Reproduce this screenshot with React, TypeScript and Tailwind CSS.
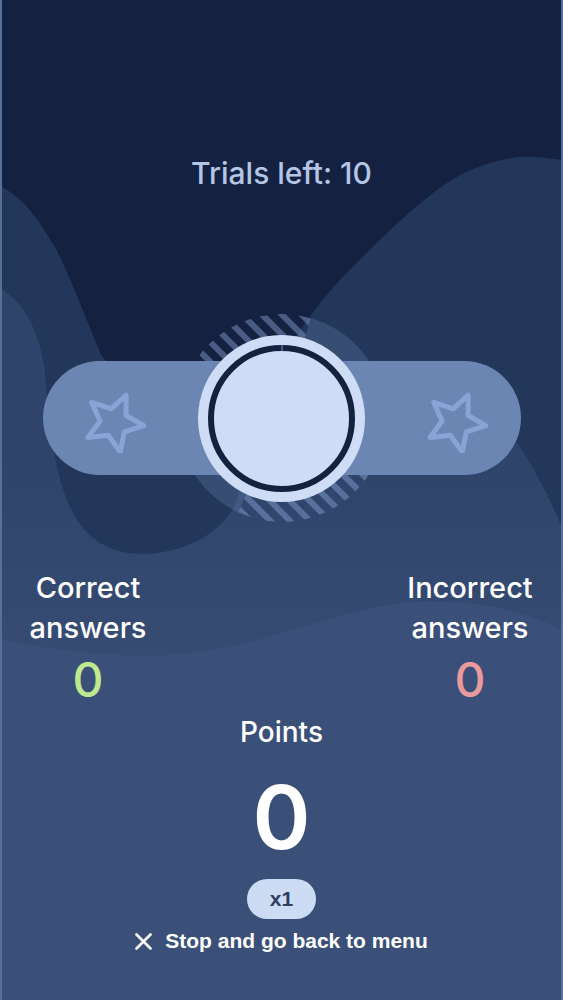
import React from "react";

const starPoints =
  "12.2,-27.4 12.12,-7 29.84,3.14 10.4,9.37 6.24,29.34 -5.69,12.79 -25.98,15 -13.92,-1.46 -22.29,-20.07 -2.91,-13.69";

function Star() {
  return (
    <svg width="70" height="70" viewBox="-35 -39.5 70 70">
      <polygon
        points={starPoints}
        fill="none"
        stroke="#8aa3d6"
        strokeWidth="5"
        strokeLinejoin="round"
      />
    </svg>
  );
}

function Halo() {
  return (
    <svg
      className="col-start-1 row-start-1"
      width="208"
      height="208"
      viewBox="0 0 208 208"
    >
      <defs>
        <pattern
          id="stripes"
          width="14"
          height="14"
          patternUnits="userSpaceOnUse"
          patternTransform="rotate(-45)"
        >
          <rect width="6" height="14" fill="rgba(140,165,215,0.45)" />
        </pattern>
        <clipPath id="stripeClip">
          <path d="M104,104 L207.6,94.9 A104,104 0 0 1 60,198.3 Z" />
          <path d="M104,104 L0,104 A104,104 0 0 1 132.7,4 Z" />
        </clipPath>
      </defs>
      <circle cx="104" cy="104" r="104" fill="url(#stripes)" clipPath="url(#stripeClip)" />
      <path
        d="M104,104 L132.7,4 A104,104 0 0 1 207.6,94.9 Z"
        fill="rgba(140,165,215,0.2)"
      />
      <path
        d="M104,104 L60,198.3 A104,104 0 0 1 0,104 Z"
        fill="rgba(140,165,215,0.2)"
      />
    </svg>
  );
}

function Background() {
  return (
    <svg
      className="absolute inset-0 h-full w-full"
      viewBox="0 0 563 1000"
      preserveAspectRatio="none"
    >
      <defs>
        <linearGradient id="lighter" x1="0" y1="460" x2="0" y2="660" gradientUnits="userSpaceOnUse">
          <stop offset="0" stopColor="#2e446b" />
          <stop offset="1" stopColor="#364c73" />
        </linearGradient>
      </defs>
      <rect width="563" height="1000" fill="#3a5078" />
      <path
        d="M0,0 H563 V630 C530,612 480,600 420,602 C340,606 260,650 170,655 C100,658 40,648 0,640 Z"
        fill="url(#lighter)"
      />
      <path
        d="M0,0 H563 V525 C548,490 530,458 517,440 L248,440 C245,470 240,495 232,510 C215,535 185,552 145,554 C110,555 85,540 70,510 C50,470 47,410 43,370 C38,330 20,300 0,290 Z"
        fill="#22375a"
      />
      <path
        d="M0,0 H563 V160 C548,158 535,156 521,157 C495,160 470,168 445,185 C410,210 380,240 350,270 C320,300 300,330 280,360 L260,440 L170,440 C150,400 120,380 100,355 C85,320 70,280 55,250 C40,225 25,200 0,187 Z"
        fill="#142140"
      />
    </svg>
  );
}

export default function App() {
  return (
    <div className="relative h-[1000px] w-full overflow-hidden border-x-2 border-[rgba(150,170,205,0.35)] bg-[#3a5078] font-[Inter,'Noto_Sans',sans-serif]">
      <Background />
      <div className="relative flex flex-col items-center pt-[155px]">
        <p className="text-[30px] leading-[36px] font-medium text-[#b4c6e6]">
          Trials left: 10
        </p>

        <div className="mt-[123px] grid h-[208px] w-full place-items-center">
          <Halo />
          <div className="col-start-1 row-start-1 flex h-[114px] w-[478px] items-center justify-between rounded-full bg-[#6b86b2] pl-[36px] pr-[30px]">
            <Star />
            <Star />
          </div>
          <div className="col-start-1 row-start-1 flex h-[167px] w-[167px] items-center justify-center rounded-full bg-[#cfdcf5]">
            <div className="relative h-[147px] w-[147px] rounded-full border-[6px] border-[#14213f]">
              <span className="absolute left-1/2 top-[-6px] h-[6px] w-px -translate-x-1/2 bg-[#8193b3]" />
            </div>
          </div>
        </div>

        <div className="mt-[46px] flex w-full justify-between pl-[11px] pr-[16px]">
          <div className="flex w-[150px] flex-col items-center text-center">
            <p className="text-[29px] leading-[40px] font-medium text-white">
              Correct
              <br />
              answers
            </p>
            <p className="mt-[8px] text-[48px] leading-none font-medium text-[#bfe88f]">
              0
            </p>
          </div>
          <div className="flex w-[150px] flex-col items-center text-center">
            <p className="text-[29px] leading-[40px] font-medium text-white">
              Incorrect
              <br />
              answers
            </p>
            <p className="mt-[8px] text-[48px] leading-none font-medium text-[#e99a9c]">
              0
            </p>
          </div>
        </div>

        <p className="mt-[10px] text-[28px] leading-[36px] font-medium text-white">
          Points
        </p>
        <p className="mt-[23px] text-[88px] leading-none font-semibold text-white">
          0
        </p>
        <div className="mt-[18px] flex h-[40px] w-[69px] items-center justify-center rounded-full bg-[#cddcf5] font-['Liberation_Sans',Arial,sans-serif] text-[21px] font-bold text-[#2d3f5f]">
          x1
        </div>
        <button className="mt-[10px] flex items-center gap-[13px] font-['Liberation_Sans',Arial,sans-serif] text-[21px] leading-[24px] font-bold text-white">
          <svg width="17" height="17" viewBox="0 0 17 17">
            <path
              d="M1.5,1.5 L15.5,15.5 M15.5,1.5 L1.5,15.5"
              stroke="white"
              strokeWidth="2.6"
              strokeLinecap="round"
            />
          </svg>
          Stop and go back to menu
        </button>
      </div>
    </div>
  );
}
